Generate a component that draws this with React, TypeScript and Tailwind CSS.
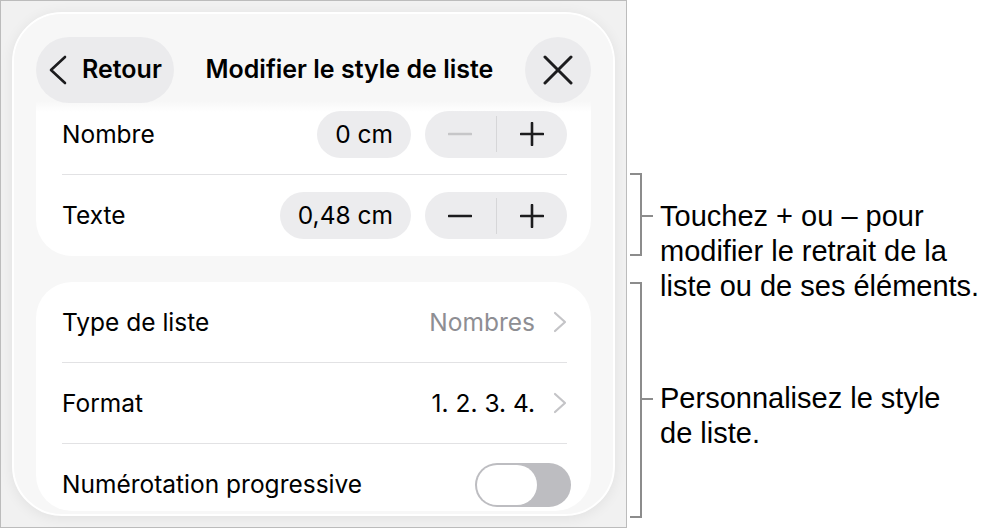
import type { ReactNode } from "react"

const ui = "font-['Inter',sans-serif] text-black"

function BackChevron() {
  return (
    <svg width="18" height="30" viewBox="0 0 18 30" fill="none">
      <path d="M16 2 L2 15 L16 28" stroke="#1c1c1e" strokeWidth="2.6" strokeLinecap="round" strokeLinejoin="round" />
    </svg>
  )
}

function CloseIcon() {
  return (
    <svg width="30" height="30" viewBox="0 0 30 30" fill="none">
      <path d="M2 2 L28 28 M28 2 L2 28" stroke="#1c1c1e" strokeWidth="3" strokeLinecap="round" />
    </svg>
  )
}

function Disclosure() {
  return (
    <svg width="14" height="22" viewBox="0 0 14 22" fill="none">
      <path d="M2 2 L12 11 L2 20" stroke="#c4c4c7" strokeWidth="2.2" strokeLinecap="round" strokeLinejoin="round" />
    </svg>
  )
}

function Minus({ disabled }: { disabled?: boolean }) {
  return (
    <svg width="24" height="24" viewBox="0 0 24 24" fill="none">
      <path d="M1 12 H23" stroke={disabled ? "#c6c6c8" : "#1c1c1e"} strokeWidth="2.6" strokeLinecap="round" />
    </svg>
  )
}

function Plus() {
  return (
    <svg width="24" height="24" viewBox="0 0 24 24" fill="none">
      <path d="M1 12 H23 M12 1 V23" stroke="#1c1c1e" strokeWidth="2.6" strokeLinecap="round" />
    </svg>
  )
}

function Row({ label, children, last }: { label: string; children: ReactNode; last?: boolean }) {
  return (
    <div className={`ml-[26px] mr-[24px] flex h-[81px] items-center justify-between ${last ? "" : "border-b border-[#e2e2e4]"}`}>
      <span className="text-[24.5px]">{label}</span>
      <div className="flex items-center">{children}</div>
    </div>
  )
}

function IndentControl({ value, minusDisabled }: { value: string; minusDisabled?: boolean }) {
  return (
    <>
      <div className="flex h-[47px] items-center rounded-full bg-[#ececee] px-[18px] text-[24.5px]">
        {value}
      </div>
      <div className="ml-[14px] flex h-[47px] w-[142px] items-center rounded-full bg-[#ececee]">
        <div className="flex flex-1 justify-center">
          <Minus disabled={minusDisabled} />
        </div>
        <div className="h-[36px] w-px bg-[#d6d6d8]" />
        <div className="flex flex-1 justify-center">
          <Plus />
        </div>
      </div>
    </>
  )
}

function Sheet() {
  return (
    <div className={`relative h-full w-full overflow-hidden rounded-[50px] border-2 border-white bg-[#f7f7f7] shadow-[0_2px_14px_rgba(0,0,0,0.07)] ${ui}`}>
      <div className="px-[22px] pt-[40px]">
        <div className="overflow-hidden rounded-[36px] bg-white pt-[40px]">
          <Row label="Nombre">
            <IndentControl value="0 cm" minusDisabled />
          </Row>
          <Row label="Texte" last>
            <IndentControl value="0,48 cm" />
          </Row>
        </div>

        <div className="mt-[26px] h-[229px] overflow-hidden rounded-[36px] bg-white">
          <Row label="Type de liste">
            <span className="mr-[18px] text-[24.5px] text-[#8e8e93]">Nombres</span>
            <Disclosure />
          </Row>
          <Row label="Format">
            <span className="mr-[18px] text-[24.5px]">1. 2. 3. 4.</span>
            <Disclosure />
          </Row>
          <Row label="Numérotation progressive" last>
            <div className="mr-[-4px] flex h-[44px] w-[96px] items-center rounded-full bg-[#bdbdc1] p-[2px]">
              <div className="h-[40px] w-[60px] rounded-full bg-white" />
            </div>
          </Row>
        </div>
      </div>

      {/* navigation bar floats over the scrolled content */}
      <div className="absolute inset-x-0 top-0 h-[98px] bg-[linear-gradient(to_bottom,#f7f7f7_0,#f7f7f7_87px,rgba(247,247,247,0)_98px)]">
        <div className="flex items-center px-[22px] pt-[23px]">
          <div className="flex h-[66px] items-center gap-[15px] rounded-full bg-[#ebebed] pl-[13px] pr-[12px]">
            <BackChevron />
            <span className="text-[25px] font-semibold">Retour</span>
          </div>
          <div className="flex-1 text-center text-[25px] font-semibold">Modifier le style de liste</div>
          <div className="grid h-[66px] w-[66px] place-items-center rounded-full bg-[#ebebed]">
            <CloseIcon />
          </div>
        </div>
      </div>
    </div>
  )
}

function Callouts() {
  const text = "ml-[7px] whitespace-nowrap font-['Liberation_Sans',Arial,sans-serif] text-[29px] leading-[35px] text-black"
  return (
    <div className="flex flex-col pl-[3px]">
      <div className="mt-[173px] flex h-[83px] items-start">
        <div className="h-[83px] w-[12px] border-y-2 border-r-2 border-[#8c8c8c]" />
        <div className="mt-[42px] h-[2px] w-[11px] bg-[#8c8c8c]" />
        <p className={`mt-[26px] ${text}`}>
          Touchez + ou – pour
          <br />
          modifier le retrait de la
          <br />
          liste ou de ses éléments.
        </p>
      </div>
      <div className="mt-[26px] flex h-[236px] items-start">
        <div className="h-[236px] w-[12px] border-y-2 border-r-2 border-[#8c8c8c]" />
        <div className="mt-[116px] h-[2px] w-[11px] bg-[#8c8c8c]" />
        <p className={`mt-[99px] ${text}`}>
          Personnalisez le style
          <br />
          de liste.
        </p>
      </div>
    </div>
  )
}

export default function App() {
  return (
    <div className="flex h-[529px] w-[984px] overflow-hidden bg-white">
      <div className="h-[528px] w-[627px] shrink-0 border border-[#bcbcbc] bg-[#f1f1f1] p-[11px]">
        <Sheet />
      </div>
      <Callouts />
    </div>
  )
}
